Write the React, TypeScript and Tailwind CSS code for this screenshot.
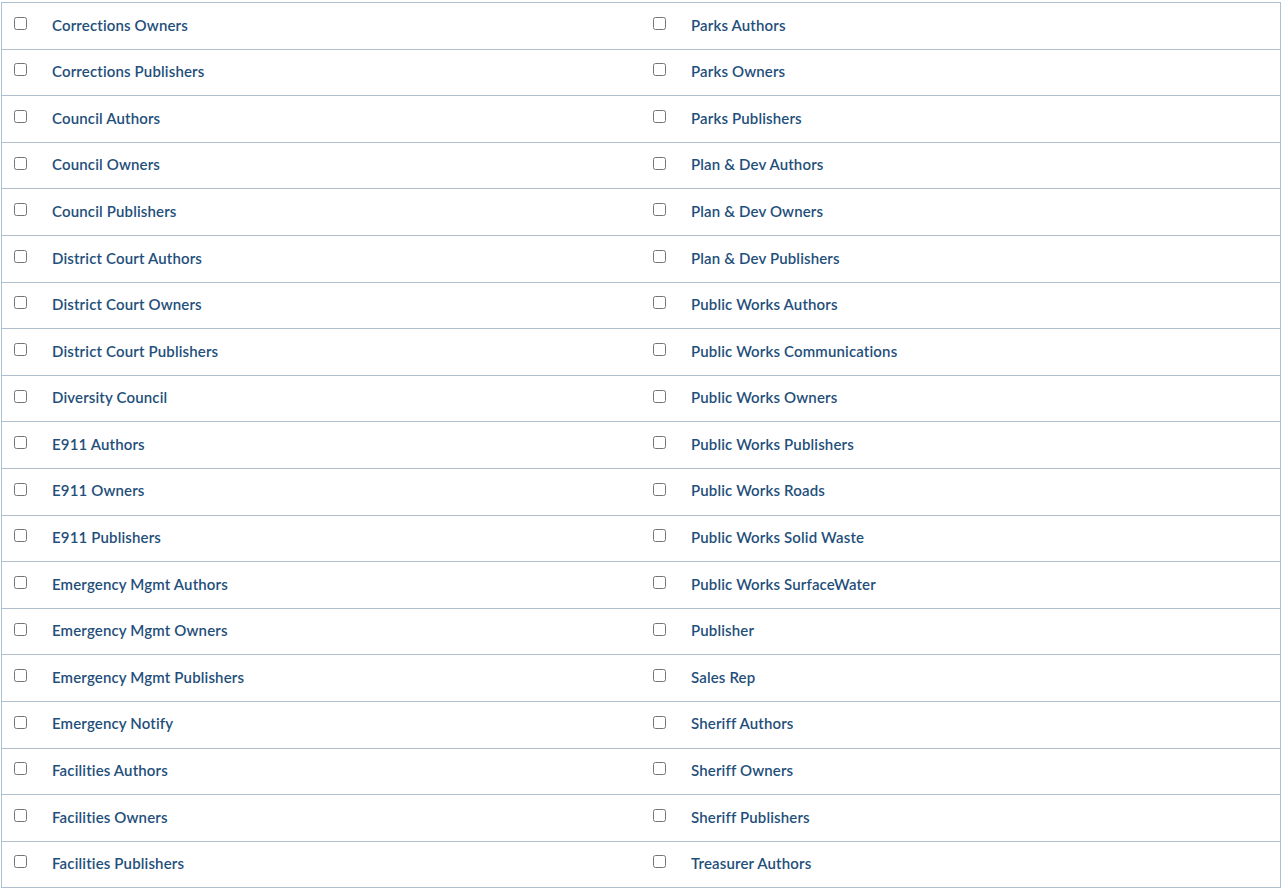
import { useState } from "react";

const left = [
  "Corrections Owners",
  "Corrections Publishers",
  "Council Authors",
  "Council Owners",
  "Council Publishers",
  "District Court Authors",
  "District Court Owners",
  "District Court Publishers",
  "Diversity Council",
  "E911 Authors",
  "E911 Owners",
  "E911 Publishers",
  "Emergency Mgmt Authors",
  "Emergency Mgmt Owners",
  "Emergency Mgmt Publishers",
  "Emergency Notify",
  "Facilities Authors",
  "Facilities Owners",
  "Facilities Publishers",
];

const right = [
  "Parks Authors",
  "Parks Owners",
  "Parks Publishers",
  "Plan & Dev Authors",
  "Plan & Dev Owners",
  "Plan & Dev Publishers",
  "Public Works Authors",
  "Public Works Communications",
  "Public Works Owners",
  "Public Works Publishers",
  "Public Works Roads",
  "Public Works Solid Waste",
  "Public Works SurfaceWater",
  "Publisher",
  "Sales Rep",
  "Sheriff Authors",
  "Sheriff Owners",
  "Sheriff Publishers",
  "Treasurer Authors",
];

function Cell({ label, checked, onToggle }: { label: string; checked: boolean; onToggle: () => void }) {
  return (
    <label className="flex h-full cursor-pointer items-center pb-[2px] pl-[12px]">
      <input
        type="checkbox"
        checked={checked}
        onChange={onToggle}
        className="m-0 mb-[3px] h-[13px] w-[13px] shrink-0"
      />
      <span className="ml-[25px] text-[15px] font-semibold tracking-[0.15px] text-[#1f4f7b]">{label}</span>
    </label>
  );
}

export default function App() {
  const [picked, setPicked] = useState<Record<string, boolean>>({});
  const toggle = (k: string) => setPicked((p) => ({ ...p, [k]: !p[k] }));

  return (
    <div className="bg-white pl-px pt-[2px]" style={{ fontFamily: "Lato, 'Noto Sans', sans-serif" }}>
      <div className="w-[1280px] border-x border-t border-[#b0bfce]">
        {left.map((l, i) => (
          <div key={l} className="grid h-[46.6px] grid-cols-[638px_1fr] border-b border-[#b0bfce]">
            <Cell label={l} checked={!!picked[l]} onToggle={() => toggle(l)} />
            <div className="pl-px">
              <Cell label={right[i]} checked={!!picked[right[i]]} onToggle={() => toggle(right[i])} />
            </div>
          </div>
        ))}
      </div>
    </div>
  );
}
